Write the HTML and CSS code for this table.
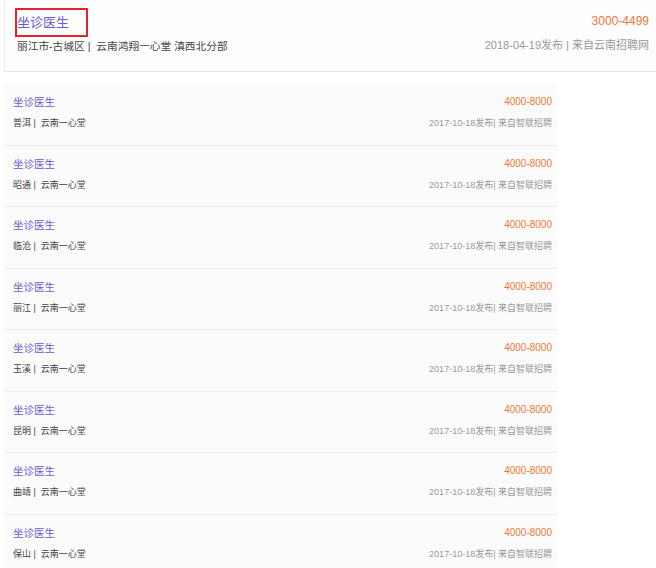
FILE: index.html
```html
<!DOCTYPE html>
<html>
<head>
<meta charset="utf-8">
<link rel="stylesheet" href="styles.css">
<title>坐诊医生</title>
</head>
<body>
<div class="head">
  <div class="head-left">
    <span class="mark">坐诊医生</span>
    <div class="head-sub">丽江市-古城区 |&nbsp; 云南鸿翔一心堂 滇西北分部</div>
  </div>
  <div class="head-right">
    <div class="head-pay">3000-4499</div>
    <div class="head-date">2018-04-19发布 | 来自云南招聘网</div>
  </div>
</div>

<div class="list">
  <div class="row">
    <div class="row-left"><div class="job">坐诊医生</div><div class="place">普洱 |&nbsp; 云南一心堂</div></div>
    <div class="row-right"><div class="pay">4000-8000</div><div class="date">2017-10-18发布| 来自智联招聘</div></div>
  </div>
  <div class="row">
    <div class="row-left"><div class="job">坐诊医生</div><div class="place">昭通 |&nbsp; 云南一心堂</div></div>
    <div class="row-right"><div class="pay">4000-8000</div><div class="date">2017-10-18发布| 来自智联招聘</div></div>
  </div>
  <div class="row">
    <div class="row-left"><div class="job">坐诊医生</div><div class="place">临沧 |&nbsp; 云南一心堂</div></div>
    <div class="row-right"><div class="pay">4000-8000</div><div class="date">2017-10-18发布| 来自智联招聘</div></div>
  </div>
  <div class="row">
    <div class="row-left"><div class="job">坐诊医生</div><div class="place">丽江 |&nbsp; 云南一心堂</div></div>
    <div class="row-right"><div class="pay">4000-8000</div><div class="date">2017-10-18发布| 来自智联招聘</div></div>
  </div>
  <div class="row">
    <div class="row-left"><div class="job">坐诊医生</div><div class="place">玉溪 |&nbsp; 云南一心堂</div></div>
    <div class="row-right"><div class="pay">4000-8000</div><div class="date">2017-10-18发布| 来自智联招聘</div></div>
  </div>
  <div class="row">
    <div class="row-left"><div class="job">坐诊医生</div><div class="place">昆明 |&nbsp; 云南一心堂</div></div>
    <div class="row-right"><div class="pay">4000-8000</div><div class="date">2017-10-18发布| 来自智联招聘</div></div>
  </div>
  <div class="row">
    <div class="row-left"><div class="job">坐诊医生</div><div class="place">曲靖 |&nbsp; 云南一心堂</div></div>
    <div class="row-right"><div class="pay">4000-8000</div><div class="date">2017-10-18发布| 来自智联招聘</div></div>
  </div>
  <div class="row">
    <div class="row-left"><div class="job">坐诊医生</div><div class="place">保山 |&nbsp; 云南一心堂</div></div>
    <div class="row-right"><div class="pay">4000-8000</div><div class="date">2017-10-18发布| 来自智联招聘</div></div>
  </div>
</div>
</body>
</html>
```

FILE: styles.css
```css
body {
    margin: 0;
    background: #fff;
    font-family: "Liberation Sans", "Noto Sans CJK SC", sans-serif;
}

/* top result, the one marked in red */
.head {
    margin-left: 4px;
    height: 63px;
    padding: 8px 7px 0 10px;
    border-left: 1px solid #ececec;
    border-bottom: 1px solid #e6e6e6;
    background: #fdfdfd;
    display: flex;
    justify-content: space-between;
}

.head-left {
    display: flex;
    flex-direction: column;
    align-items: flex-start;
}

span.mark {
    display: block;
    border: 2px solid #e0262b;
    height: 25px;
    line-height: 25px;
    padding: 0 17px 0 0;
    font-size: 13px;
    color: #6b5bd0;
}

.head-sub {
    margin-top: 2px;
    padding-left: 2px;
    line-height: 14px;
    font-size: 10.7px;
    color: #444;
}

.head-right {
    text-align: right;
    padding-top: 5px;
}

.head-pay {
    line-height: 16px;
    font-size: 12px;
    color: #f07836;
}

.head-date {
    margin-top: 9px;
    line-height: 14px;
    font-size: 11px;
    color: #999;
}

/* other results */
.list {
    margin: 12px 0 0 4px;
    width: 553px;
}

.row {
    height: 49.5px;
    padding: 11px 5px 0 9px;
    border-bottom: 1px solid #ededed;
    background: #fbfbfc;
    display: flex;
    justify-content: space-between;
}

.job {
    line-height: 14px;
    font-size: 10.5px;
    color: #6b5bd0;
}

.place {
    margin-top: 7px;
    line-height: 14px;
    font-size: 9px;
    color: #444;
}

.row-right {
    text-align: right;
}

.pay {
    line-height: 14px;
    font-size: 10px;
    color: #f07836;
}

.date {
    margin-top: 7px;
    line-height: 14px;
    font-size: 9px;
    color: #999;
}
```
